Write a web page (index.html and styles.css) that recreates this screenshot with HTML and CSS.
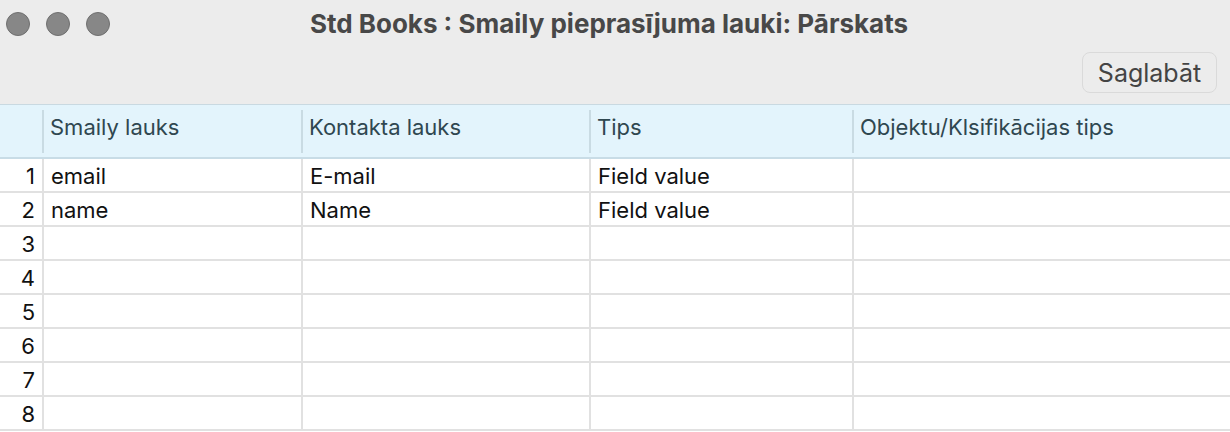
FILE: index.html
```html
<!DOCTYPE html>
<html lang="lv">
<head>
<meta charset="utf-8">
<title>Std Books : Smaily pieprasījuma lauki: Pārskats</title>
<link rel="stylesheet" href="styles.css">
</head>
<body>
<div class="window">
  <div class="toolbar">
    <div class="titlebar">
      <div class="lights">
        <span class="light"></span>
        <span class="light"></span>
        <span class="light"></span>
      </div>
      <div class="title">Std Books : Smaily pieprasījuma lauki: Pārskats</div>
    </div>
    <div class="actions">
      <button class="btn">Saglabāt</button>
    </div>
  </div>
  <div class="grid">
    <div class="head">
      <div class="hcell num"></div>
      <div class="hcell">Smaily lauks</div>
      <div class="hcell">Kontakta lauks</div>
      <div class="hcell">Tips</div>
      <div class="hcell">Objektu/Klsifikācijas tips</div>
    </div>
    <div class="row"><div class="cell num">1</div><div class="cell">email</div><div class="cell">E-mail</div><div class="cell">Field value</div><div class="cell"></div></div>
    <div class="row"><div class="cell num">2</div><div class="cell">name</div><div class="cell">Name</div><div class="cell">Field value</div><div class="cell"></div></div>
    <div class="row"><div class="cell num">3</div><div class="cell"></div><div class="cell"></div><div class="cell"></div><div class="cell"></div></div>
    <div class="row"><div class="cell num">4</div><div class="cell"></div><div class="cell"></div><div class="cell"></div><div class="cell"></div></div>
    <div class="row"><div class="cell num">5</div><div class="cell"></div><div class="cell"></div><div class="cell"></div><div class="cell"></div></div>
    <div class="row"><div class="cell num">6</div><div class="cell"></div><div class="cell"></div><div class="cell"></div><div class="cell"></div></div>
    <div class="row"><div class="cell num">7</div><div class="cell"></div><div class="cell"></div><div class="cell"></div><div class="cell"></div></div>
    <div class="row"><div class="cell num">8</div><div class="cell"></div><div class="cell"></div><div class="cell"></div><div class="cell"></div></div>
  </div>
</div>
</body>
</html>
```

FILE: styles.css
```css
* { box-sizing: border-box; }
html, body { margin: 0; padding: 0; }
body {
  width: 1230px;
  height: 432px;
  overflow: hidden;
  background: #ffffff;
  font-family: "Inter", "Roboto", "Liberation Sans", sans-serif;
}
.window { display: flex; flex-direction: column; }
.toolbar {
  height: 105px;
  background: #ececec;
  border-bottom: 1px solid #c9d9e1;
  display: flex;
  flex-direction: column;
}
.titlebar {
  height: 46px;
  position: relative;
  display: flex;
  align-items: center;
  justify-content: center;
}
.lights {
  position: absolute;
  left: 6px;
  top: 12px;
  display: flex;
  gap: 16px;
}
.light {
  width: 24px;
  height: 24px;
  border-radius: 50%;
  background: #878787;
  border: 1px solid #6f6f6f;
}
.title {
  font-family: "Inter", "Roboto", sans-serif;
  font-weight: 700;
  font-size: 26px;
  color: #484848;
  margin-left: -12px;
}
.actions {
  display: flex;
  justify-content: flex-end;
  padding: 6px 13px 0 0;
}
.btn {
  height: 41px;
  width: 135px;
  border: 1px solid #dadada;
  border-radius: 8px;
  background: #ececec;
  font-family: "Inter", "Roboto", sans-serif;
  font-size: 25px;
  color: #444444;
  padding: 0;
}
.head, .row {
  display: grid;
  grid-template-columns: 42px 259px 288px 263px 1fr;
}
.head {
  height: 54px;
  background: #e3f4fc;
  border-bottom: 2px solid #c8dce6;
}
.hcell {
  font-size: 22px;
  color: #2f4750;
  padding-left: 8px;
  padding-bottom: 8px;
  display: flex;
  align-items: center;
  position: relative;
}
.hcell + .hcell::before {
  content: "";
  position: absolute;
  left: 0;
  top: 5px;
  bottom: 4px;
  width: 2px;
  background: #c9dbe3;
}
.row {
  height: 34px;
  border-bottom: 2px solid #e1e1e1;
}
.cell {
  font-size: 22px;
  color: #111111;
  padding-left: 7px;
  display: flex;
  align-items: center;
  padding-top: 2px;
}
.cell + .cell {
  border-left: 2px solid #e1e1e1;
}
.cell.num {
  justify-content: flex-end;
  padding-left: 0;
  padding-right: 7px;
}
```
